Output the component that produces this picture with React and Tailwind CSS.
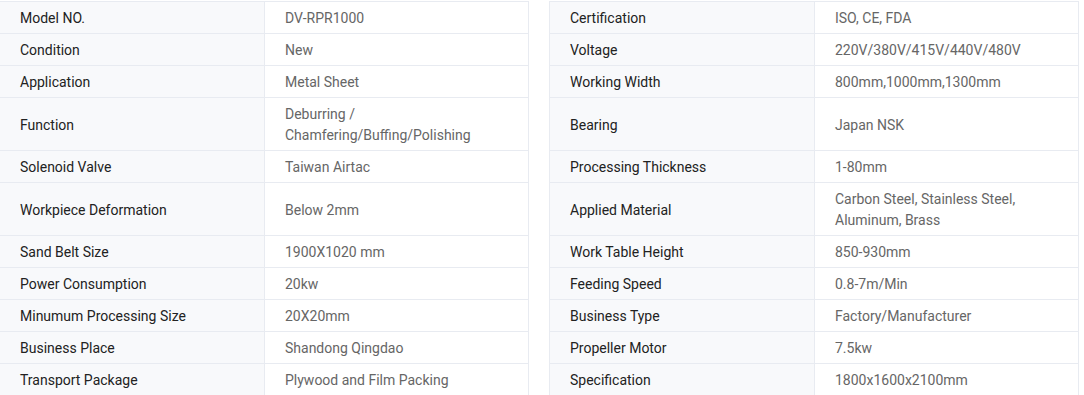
import React from "react";

const rows = [
  ["Model NO.", "DV-RPR1000", "Certification", "ISO, CE, FDA"],
  ["Condition", "New", "Voltage", "220V/380V/415V/440V/480V"],
  ["Application", "Metal Sheet", "Working Width", "800mm,1000mm,1300mm"],
  ["Function", "Deburring / Chamfering/Buffing/Polishing", "Bearing", "Japan NSK"],
  ["Solenoid Valve", "Taiwan Airtac", "Processing Thickness", "1-80mm"],
  ["Workpiece Deformation", "Below 2mm", "Applied Material", "Carbon Steel, Stainless Steel, Aluminum, Brass"],
  ["Sand Belt Size", "1900X1020 mm", "Work Table Height", "850-930mm"],
  ["Power Consumption", "20kw", "Feeding Speed", "0.8-7m/Min"],
  ["Minumum Processing Size", "20X20mm", "Business Type", "Factory/Manufacturer"],
  ["Business Place", "Shandong Qingdao", "Propeller Motor", "7.5kw"],
  ["Transport Package", "Plywood and Film Packing", "Specification", "1800x1600x2100mm"],
];

function Label({ text, first }) {
  return (
    <div
      className={
        "w-[266px] shrink-0 flex items-center pl-5 pr-5 pt-[6px] pb-[4px] bg-[#f8f9fb] border-l border-r border-b border-[#e8ebf1] text-[#222222] " +
        (first ? "border-t" : "")
      }
    >
      {text}
    </div>
  );
}

function Value({ text, first }) {
  return (
    <div
      className={
        "w-[264px] shrink-0 flex items-center pl-5 pr-5 pt-[6px] pb-[4px] bg-white border-r border-b border-[#e8ebf1] text-[#666666] " +
        (first ? "border-t" : "")
      }
    >
      {text}
    </div>
  );
}

export default function App() {
  return (
    <div className="w-[1084px] h-[395px] overflow-hidden bg-white font-['Roboto',sans-serif] text-[14px] leading-[21px]">
      <div className="mt-px ml-[-1px] flex flex-col">
        {rows.map((r, i) => (
          <div key={i} className="flex">
            <Label text={r[0]} first={i === 0} />
            <Value text={r[1]} first={i === 0} />
            <div className="w-5 shrink-0" />
            <Label text={r[2]} first={i === 0} />
            <Value text={r[3]} first={i === 0} />
          </div>
        ))}
      </div>
    </div>
  );
}
